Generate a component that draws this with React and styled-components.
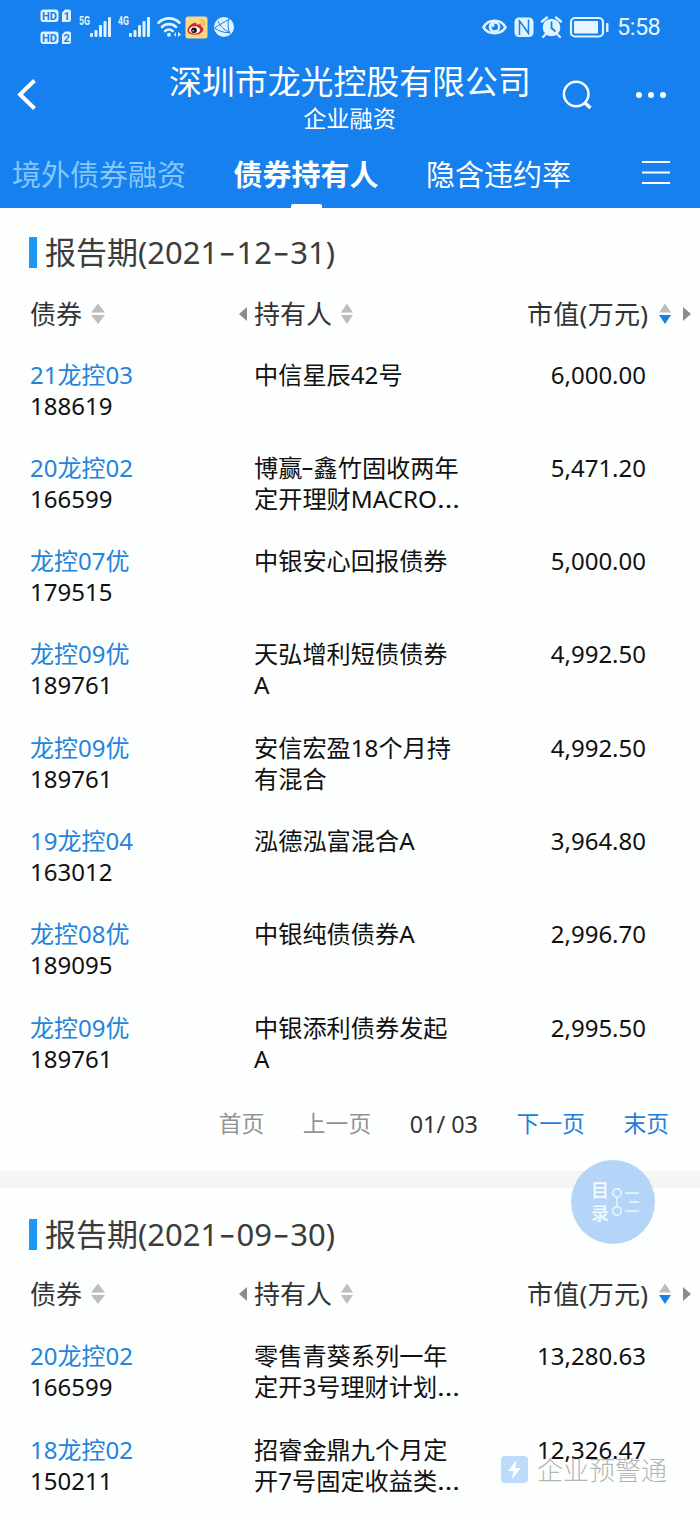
import React from "react";
import styled, { createGlobalStyle } from "styled-components";

const GlobalStyle = createGlobalStyle`
  * {
    box-sizing: border-box;
  }
  body {
    margin: 0;
    background: #fdfefe;
    font-family: "Noto Sans", "Noto Sans CJK SC", sans-serif;
  }
`;

const Screen = styled.div`
  position: relative;
  width: 700px;
  height: 1516px;
  overflow: hidden;
  background: #fdfefe;
  white-space: nowrap;
`;

const Header = styled.header`
  height: 208px;
  background: #1680ee;
  color: #fff;
`;

const StatusBar = styled.div`
  display: flex;
  justify-content: space-between;
  height: 54px;
  padding: 0 39px 0 40px;
`;

const StatusGroup = styled.div`
  display: flex;
  align-items: center;
`;

const SimSignals = styled.div`
  display: flex;
  gap: 5px;
  margin: 0 5px 0 7px;
`;

const AppIcons = styled.div`
  display: flex;
  gap: 5px;
  margin-left: 3px;
`;

const Clock = styled.span`
  margin-left: 8px;
  width: 44px;
  font-family: Roboto, sans-serif;
  font-size: 23.5px;
  font-weight: 400;
  line-height: 54px;
  letter-spacing: -0.5px;
  color: #e3f5ff;
`;

const NavBar = styled.div`
  display: flex;
  height: 84px;
  padding: 0 33px 0 17px;
`;

const BackButton = styled.button`
  display: flex;
  width: 152px;
  padding: 25px 0 0;
  border: none;
  background: none;
`;

const Titles = styled.div`
  width: 361px;
  text-align: center;
`;

const Title = styled.h1`
  margin: 6px 0 0;
  font-size: 32.9px;
  font-weight: 400;
  line-height: 43px;
`;

const SubTitle = styled.div`
  font-size: 23.2px;
  line-height: 30px;
`;

const NavIcons = styled.div`
  display: flex;
  flex: 1;
  justify-content: space-between;
  padding: 26px 0 0 32px;
`;

const Tabs = styled.nav`
  display: flex;
  align-items: flex-start;
  height: 70px;
  padding-left: 12px;
`;

const Tab = styled.div`
  display: flex;
  flex-direction: column;
  align-items: center;
  justify-content: space-between;
  height: 70px;
  margin-right: 47.5px;
  padding-top: 16px;
  font-size: 29px;
  line-height: 42px;
  font-weight: ${(props) => (props.$active ? 700 : 400)};
  color: ${(props) => (props.$muted ? "#85c6fb" : "#fff")};

  &::after {
    content: "";
    width: 31px;
    height: 4px;
    border-radius: 2px 2px 0 0;
    background: ${(props) => (props.$active ? "#fff" : "transparent")};
  }
`;

const MenuButton = styled.button`
  margin: 22px 0 0 23px;
  padding: 0;
  border: none;
  background: none;
`;

const Section = styled.section`
  padding: ${(props) => props.$top}px 0 32px 29px;
`;

const SectionTitle = styled.h2`
  display: flex;
  align-items: center;
  height: 31px;
  margin: 0;
  font-size: 31px;
  font-weight: 400;
  line-height: 30px;
  color: #3c3c3c;

  &::before {
    content: "";
    width: 8px;
    height: 31px;
    margin-right: 8px;
    background: #1e97f2;
  }
`;

const Dash = styled.span`
  display: inline-block;
  margin: 0 ${(props) => props.$space || 0}px;
  font-family: Inter, sans-serif;
  line-height: 1;
  transform: scaleX(1.25);
`;

const Dots = styled.span`
  display: inline-block;
  line-height: 1;
  transform: scaleX(1.2);
  transform-origin: left;
`;

const Grid = styled.div`
  display: grid;
  grid-template-columns: 210px 288px 1fr;
`;

const HeadRow = styled(Grid)`
  height: 40px;
  margin: ${(props) => (props.$tight ? "24px 0 26.5px" : "26px 0 24.5px")};
  font-size: 26px;
  line-height: 40px;
  color: #333;
`;

const HeadCell = styled.div`
  display: flex;
  align-items: center;
  gap: ${(props) => props.$gap || 8}px;
  padding-left: ${(props) => props.$indent || 0}px;
`;

const HeadLabel = styled.span`
  margin-right: ${(props) => props.$space ?? 2}px;
  letter-spacing: ${(props) => props.$spacing || 0}px;
`;

const Row = styled(Grid)`
  height: 93.3px;
  font-size: 24px;
  line-height: 31.1px;
  color: #111;
`;

const Bond = styled.div`
  padding-left: 1px;
`;

const BondName = styled.div`
  color: #2484dc;
`;

const Holder = styled.div`
  padding-left: 15px;
  font-size: 24.2px;
`;

const Amount = styled.div`
  padding-right: 54px;
  text-align: right;
`;

const Pager = styled.div`
  display: flex;
  justify-content: flex-end;
  gap: 38.5px;
  height: 30px;
  margin-top: 4px;
  padding-right: 31px;
  font-size: 22.8px;
  line-height: 30px;
`;

const PageLink = styled.span`
  color: ${(props) => (props.$disabled ? "#949494" : "#1f80dc")};
`;

const PageCount = styled.span`
  font-size: 23.4px;
  color: #333;
`;

const Divider = styled.div`
  height: 17px;
  background: #f5f5f6;
`;

const Catalog = styled.button`
  position: absolute;
  left: 571px;
  top: 1160px;
  display: flex;
  align-items: center;
  gap: 2px;
  width: 84px;
  height: 84px;
  padding: 0 0 0 20px;
  border: none;
  border-radius: 50%;
  background: rgba(175, 210, 248, 0.93);
  color: #f4faff;
  font-family: inherit;
  font-size: 18px;
  font-weight: 500;
  line-height: 23px;
`;

const Watermark = styled.div`
  position: absolute;
  left: 501px;
  top: 1449px;
  display: flex;
  align-items: center;
  gap: 9px;
  font-family: "Noto Sans CJK SC", sans-serif;
  font-size: 26px;
  font-weight: 300;
  line-height: 40px;
  color: rgba(130, 130, 130, 0.6);
`;

const periods = [
  {
    date: ["2021", "12", "31"],
    rows: [
      ["21龙控03", "188619", ["中信星辰42号"], "6,000.00"],
      ["20龙控02", "166599", ["博赢-鑫竹固收两年", "定开理财MACRO…"], "5,471.20"],
      ["龙控07优", "179515", ["中银安心回报债券"], "5,000.00"],
      ["龙控09优", "189761", ["天弘增利短债债券", "A"], "4,992.50"],
      ["龙控09优", "189761", ["安信宏盈18个月持", "有混合"], "4,992.50"],
      ["19龙控04", "163012", ["泓德泓富混合A"], "3,964.80"],
      ["龙控08优", "189095", ["中银纯债债券A"], "2,996.70"],
      ["龙控09优", "189761", ["中银添利债券发起", "A"], "2,995.50"],
    ],
  },
  {
    date: ["2021", "09", "30"],
    rows: [
      ["20龙控02", "166599", ["零售青葵系列一年", "定开3号理财计划…"], "13,280.63"],
      ["18龙控02", "150211", ["招睿金鼎九个月定", "开7号固定收益类…"], "12,326.47"],
    ],
  },
];

const light = "#dff3ff";

function HdBadges() {
  return (
    <svg width="32" height="38" viewBox="0 0 32 38" fontFamily="Roboto" fontWeight="700" fontSize="11">
      {[1, 2].map((n) => (
        <g key={n} transform={`translate(0 ${(n - 1) * 22})`}>
          <rect x="0.5" y="1.5" width="18" height="12.5" rx="3" fill={light} />
          <path d="M22 4.5l3-3h4a2 2 0 0 1 2 2V12a2 2 0 0 1-2 2h-7z" fill={light} />
          <text x="2" y="11.8" fill="#1680ee">HD</text>
          <text x="23.5" y="11.8" fill="#1680ee">{n}</text>
        </g>
      ))}
    </svg>
  );
}

function Signal({ label }) {
  return (
    <svg width="34" height="24" viewBox="0 0 34 24" fill={light}>
      <text x="0" y="10" fontFamily="Roboto" fontWeight="700" fontSize="12" textLength="11" lengthAdjust="spacingAndGlyphs">
        {label}
      </text>
      {[4, 7, 12, 16, 20].map((h, i) => (
        <rect key={h} x={11 + i * 4.5} y={22 - h} width="3" height={h} rx="1" />
      ))}
    </svg>
  );
}

function Wifi() {
  return (
    <svg width="25" height="22" viewBox="0 0 25 22" fill="none" stroke={light} strokeWidth="2.6" strokeLinecap="round">
      <path d="M1.5 6.7a15 15 0 0 1 21 0M5 11a10 10 0 0 1 14 0M8.2 15a5.5 5.5 0 0 1 7.4 0" />
      <circle cx="12" cy="18.7" r="2" fill={light} stroke="none" />
      <path d="M19 16l-2 2.5 2 2.5zM21 16l3 2.5-3 2.5z" fill={light} stroke="none" />
    </svg>
  );
}

function Weibo() {
  return (
    <svg width="23" height="23" viewBox="0 0 23 23">
      <rect x="0.5" y="0.5" width="22" height="22" rx="2.5" fill="#fbd986" />
      <path
        d="M2.5 14.5c0-4 5.5-8.5 8.2-7.8 1 .3 1 1.3.7 2.1 3-1.2 5.3-.7 4.6 1.7 5 1.6 1.8 8.3-6 8.3-4.2 0-7.5-1.8-7.5-4.3z"
        fill="#d8242b"
      />
      <ellipse cx="9.6" cy="14" rx="5.5" ry="3.7" fill="#fff" />
      <circle cx="9" cy="14.2" r="2.8" fill="#151515" />
      <circle cx="8.2" cy="14.7" r="0.8" fill="#fff" />
      <path d="M14.5 4c3.2-.6 5.5 1.7 4.8 5M15 6.7c1.5-.2 2.4.8 2.1 2.2" fill="none" stroke="#e7b156" strokeWidth="1.4" />
    </svg>
  );
}

function Globe() {
  return (
    <svg width="22" height="22" viewBox="0 0 22 22">
      <circle cx="11" cy="11" r="10" fill={light} />
      <path
        d="M2 11.5L16.5 3M5 5c2 5 6 9 12 11.5M16 2.5c-1.5 5-1.2 10 1 15.500M1.500 12c5 3.500 10 5 15.500 4.500"
        fill="none"
        stroke="#1680ee"
        strokeWidth="1"
      />
    </svg>
  );
}

function DeviceIcons() {
  return (
    <svg width="127" height="24" viewBox="0 0 127 24">
      <path
        d="M1.5 12.300C6 3.500 19 3.500 23.500 12.300 19 20 6 20 1.500 12.300z"
        fill="none"
        stroke={light}
        strokeWidth="2.6"
      />
      <circle cx="12.5" cy="11.8" r="5.8" fill={light} />
      <circle cx="12.8" cy="12" r="3.2" fill="#1680ee" />
      <circle cx="10.8" cy="10.3" r="1.7" fill={light} />
      <rect x="32.5" y="2.5" width="19" height="19.5" rx="4.5" fill={light} />
      <path d="M37.500 20V6l9 12M46.500 4.500V18.500L38 6.500" fill="none" stroke="#1680ee" strokeWidth="1.5" />
      <circle cx="69.5" cy="12.5" r="8.8" fill={light} />
      <path d="M60 6.500l5-4M79 6.500l-5-4M64 19l-3 3M75 19l3 3" stroke={light} strokeWidth="2.4" strokeLinecap="round" />
      <path d="M69.500 6.500v6.500l4 3.500" fill="none" stroke="#1680ee" strokeWidth="1.8" />
      <rect x="89" y="3" width="32" height="18.5" rx="4" fill="none" stroke={light} strokeWidth="2.2" />
      <rect x="92" y="6" width="24" height="12.5" rx="1" fill="#e8f6ff" />
      <rect x="124" y="8" width="2.5" height="9" rx="1" fill={light} />
    </svg>
  );
}

function SortIcon({ active, width = 14 }) {
  return (
    <svg width={width} height="22" viewBox="0 0 14 22" preserveAspectRatio="none">
      <path d="M7 0.500l7 9H0z" fill="#bdbdbd" />
      <path d="M0 12h14l-7 9z" fill={active ? "#1a7fe2" : "#bdbdbd"} />
    </svg>
  );
}

function ArrowIcon({ left }) {
  return (
    <svg width="8" height="14" viewBox="0 0 8 14">
      <path d={left ? "M8 0v14L0 7z" : "M0 0v14l8-7z"} fill="#8c8c8c" />
    </svg>
  );
}

function HolderLine({ text }) {
  return (
    <div>
      {text.split(/([-…])/).map((part, i) => {
        if (part === "-") return <Dash key={i}>-</Dash>;
        if (part === "…") return <Dots key={i}>…</Dots>;
        return part;
      })}
    </div>
  );
}

function Period({ date, rows, top, tight, children }) {
  return (
    <Section $top={top}>
      <SectionTitle>
        <span>
          报告期({date[0]}
          <Dash $space={2}>-</Dash>
          {date[1]}
          <Dash $space={2}>-</Dash>
          {date[2]})
        </span>
      </SectionTitle>
      <HeadRow $tight={tight}>
        <HeadCell $indent={1} $gap={7}>
          <HeadLabel>债券</HeadLabel>
          <SortIcon />
        </HeadCell>
        <HeadCell $gap={7}>
          <ArrowIcon left />
          <HeadLabel>持有人</HeadLabel>
          <SortIcon width={12} />
        </HeadCell>
        <HeadCell $gap={12}>
          <HeadLabel $spacing={0.3} $space={-1}>市值(万元)</HeadLabel>
          <SortIcon active width={12} />
          <ArrowIcon />
        </HeadCell>
      </HeadRow>
      {rows.map(([name, code, holder, amount], i) => (
        <Row key={i}>
          <Bond>
            <BondName>{name}</BondName>
            <div>{code}</div>
          </Bond>
          <Holder>
            {holder.map((line) => (
              <HolderLine key={line} text={line} />
            ))}
          </Holder>
          <Amount>{amount}</Amount>
        </Row>
      ))}
      {children}
    </Section>
  );
}

function App() {
  return (
    <Screen>
      <GlobalStyle />
      <Header>
        <StatusBar>
          <StatusGroup>
            <HdBadges />
            <SimSignals>
              <Signal label="5G" />
              <Signal label="4G" />
            </SimSignals>
            <Wifi />
            <AppIcons>
              <Weibo />
              <Globe />
            </AppIcons>
          </StatusGroup>
          <StatusGroup>
            <DeviceIcons />
            <Clock>5:58</Clock>
          </StatusGroup>
        </StatusBar>
        <NavBar>
          <BackButton>
            <svg width="20" height="31" viewBox="0 0 20 31" fill="none" stroke="#fff" strokeWidth="4">
              <path d="M17.500 1.500L3 15.500l14.500 14" />
            </svg>
          </BackButton>
          <Titles>
            <Title>深圳市龙光控股有限公司</Title>
            <SubTitle>企业融资</SubTitle>
          </Titles>
          <NavIcons>
            <svg width="32" height="32" viewBox="0 0 32 32" fill="none" stroke="#fff" strokeWidth="2.5">
              <circle cx="14.2" cy="14" r="12.3" />
              <path d="M22.500 22.500l6 5.500" strokeWidth="3.5" />
            </svg>
            <svg width="32" height="32" viewBox="0 0 32 32" fill="#fff">
              <circle cx="4" cy="15" r="3" />
              <circle cx="16" cy="15" r="3" />
              <circle cx="28" cy="15" r="3" />
            </svg>
          </NavIcons>
        </NavBar>
        <Tabs>
          <Tab $muted>境外债券融资</Tab>
          <Tab $active>债券持有人</Tab>
          <Tab>隐含违约率</Tab>
          <MenuButton>
            <svg width="28" height="26" viewBox="0 0 28 26" stroke="#fff" strokeWidth="2">
              <path d="M0 2h28M0 12.500h28M0 23h28" />
            </svg>
          </MenuButton>
        </Tabs>
      </Header>

      <Period {...periods[0]} top={29}>
        <Pager>
          <PageLink $disabled>首页</PageLink>
          <PageLink $disabled>上一页</PageLink>
          <PageCount>01/ 03</PageCount>
          <PageLink>下一页</PageLink>
          <PageLink>末页</PageLink>
        </Pager>
      </Period>
      <Divider />
      <Period {...periods[1]} top={31} tight />

      <Catalog>
        <span>
          目
          <br />录
        </span>
        <svg width="30" height="32" viewBox="0 0 30 32" fill="none" stroke="#eef7ff" strokeWidth="1.4">
          <circle cx="6" cy="7" r="4.2" />
          <circle cx="6" cy="25" r="4.2" />
          <path d="M6 11v10M14 7h14M18 16h10M14 25h14" />
        </svg>
      </Catalog>

      <Watermark>
        <svg width="27" height="27" viewBox="0 0 27 27">
          <rect width="27" height="27" rx="4" fill="#bcdcfa" />
          <path d="M15.500 4L7 15h5.500l-1.500 8L20 12h-5.500z" fill="#fff" />
        </svg>
        企业预警通
      </Watermark>
    </Screen>
  );
}

export default App;
